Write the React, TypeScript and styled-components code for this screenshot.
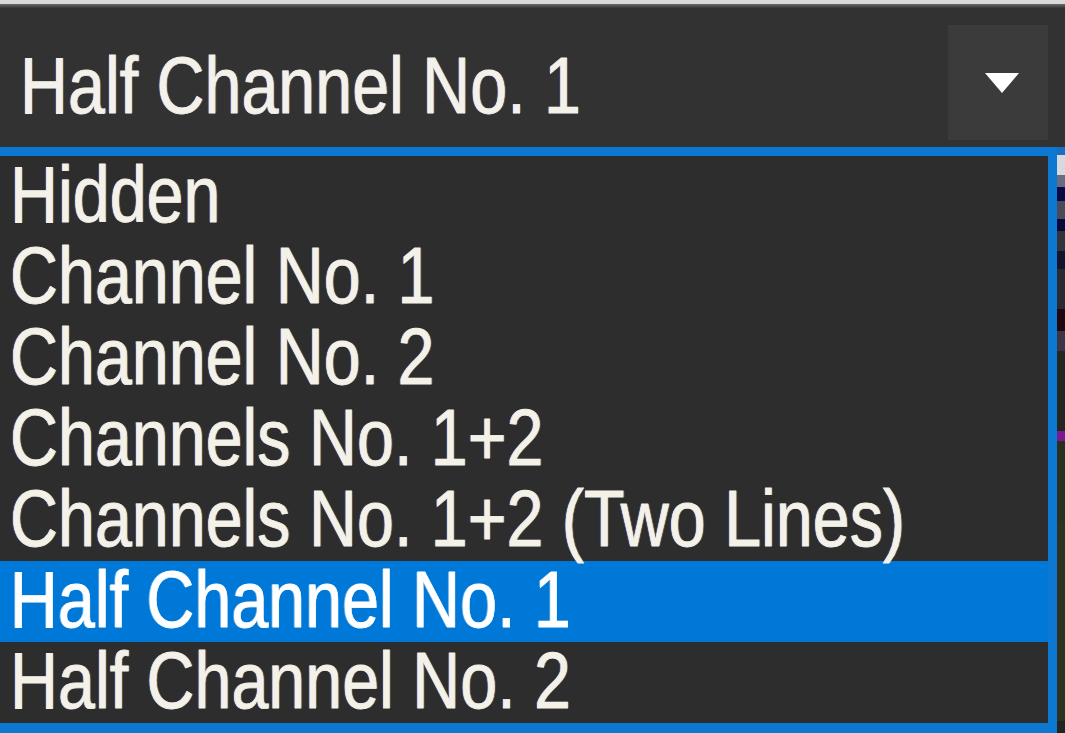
import React from "react";
import styled, { createGlobalStyle } from "styled-components";

const Global = createGlobalStyle`
  html, body { margin: 0; padding: 0; background: #2e2e2e; }
  #root { width: 1065px; height: 733px; }
`;

const FONT = `"Liberation Sans", Arial, sans-serif`;

const Screen = styled.div`
  width: 1065px;
  height: 733px;
  overflow: hidden;
  display: flex;
  flex-direction: column;
  background: #303030;
  font-family: ${FONT};
`;

const TopEdge = styled.div`
  height: 4px;
  background: #d9d9d9;
  flex: none;
`;

const TopShade = styled.div`
  height: 5px;
  flex: none;
  background: linear-gradient(#6a6a6a, #2a2a2a);
`;

const Header = styled.div`
  height: 138px;
  flex: none;
  box-sizing: border-box;
  display: flex;
  align-items: stretch;
  padding: 16px 17px 7px 20px;
  background: #323232;
`;

const HeaderText = styled.div`
  flex: 1;
  min-width: 0;
  display: flex;
  align-items: center;
  padding-top: 6px;
  font-size: 80px;
  color: #f4f1ea;
  white-space: nowrap;
  -webkit-text-stroke: 0.8px #f4f1ea;
  text-shadow: -1.5px 0 0 rgba(80, 120, 255, 0.45), 1.5px 0 0 rgba(255, 190, 90, 0.35);
`;

const Narrow = styled.span`
  display: inline-block;
  transform: scaleX(0.83);
  transform-origin: left center;
`;

const DropButton = styled.div`
  width: 100px;
  flex: none;
  display: flex;
  align-items: center;
  justify-content: center;
  padding-left: 8px;
  box-sizing: border-box;
  background: #3b3b3b;
`;

const Body = styled.div`
  flex: 1;
  display: flex;
  min-height: 0;
`;

const List = styled.div`
  flex: 1;
  min-width: 0;
  overflow: hidden;
  display: flex;
  flex-direction: column;
  border-top: 9px solid #0d78d2;
  border-right: 9px solid #0d78d2;
  border-bottom: 10px solid #0d78d2;
  background: #2d2d2d;
`;

const Row = styled.div<{ $selected?: boolean }>`
  height: 81px;
  flex: none;
  box-sizing: border-box;
  padding-left: 10px;
  padding-bottom: 3px;
  font-size: 80px;
  line-height: 78px;
  white-space: nowrap;
  background: ${(p) => (p.$selected ? "#0078d7" : "#2d2d2d")};
  color: ${(p) => (p.$selected ? "#ffffff" : "#f4f1e8")};
  -webkit-text-stroke: 0.8px ${(p) => (p.$selected ? "#ffffff" : "#f4f1e8")};
  text-shadow: ${(p) =>
    p.$selected
      ? "-1.5px 0 0 rgba(200, 230, 255, 0.5)"
      : "-1.5px 0 0 rgba(80, 120, 255, 0.45), 1.5px 0 0 rgba(255, 190, 90, 0.35)"};
`;

const Strip = styled.div`
  width: 8px;
  flex: none;
  display: flex;
  flex-direction: column;
  background: #23241e;
`;

const StripBit = styled.div<{ $h: number; $c: string }>`
  height: ${(p) => p.$h}px;
  flex: none;
  background: ${(p) => p.$c};
`;

const items = [
  "Hidden",
  "Channel No. 1",
  "Channel No. 2",
  "Channels No. 1+2",
  "Channels No. 1+2 (Two Lines)",
  "Half Channel No. 1",
  "Half Channel No. 2",
];

const stripBits: [number, string][] = [
  [8, "#1a6fc0"],
  [20, "#d8d8e0"],
  [12, "#6a6a80"],
  [14, "#0a0a40"],
  [18, "#4a4a5a"],
  [12, "#0a0a3a"],
  [20, "#33333c"],
  [18, "#14142a"],
  [40, "#2a2a30"],
  [22, "#200810"],
  [20, "#3f3446"],
  [80, "#25261f"],
  [10, "#7a1a90"],
  [80, "#2a3020"],
  [200, "#2c3322"],
];

export default function App() {
  return (
    <>
      <Global />
      <Screen>
        <TopEdge />
        <TopShade />
        <Header>
          <HeaderText>
            <Narrow>Half Channel No. 1</Narrow>
          </HeaderText>
          <DropButton>
            <svg width="38" height="24" viewBox="0 0 38 24">
              <path d="M2 2 L36 2 L19 22 Z" fill="#ffffff" />
            </svg>
          </DropButton>
        </Header>
        <Body>
          <List>
            {items.map((t, i) => (
              <Row key={t} $selected={i === 5}>
                <Narrow>{t}</Narrow>
              </Row>
            ))}
          </List>
          <Strip>
            {stripBits.map(([h, c], i) => (
              <StripBit key={i} $h={h} $c={c} />
            ))}
          </Strip>
        </Body>
      </Screen>
    </>
  );
}
